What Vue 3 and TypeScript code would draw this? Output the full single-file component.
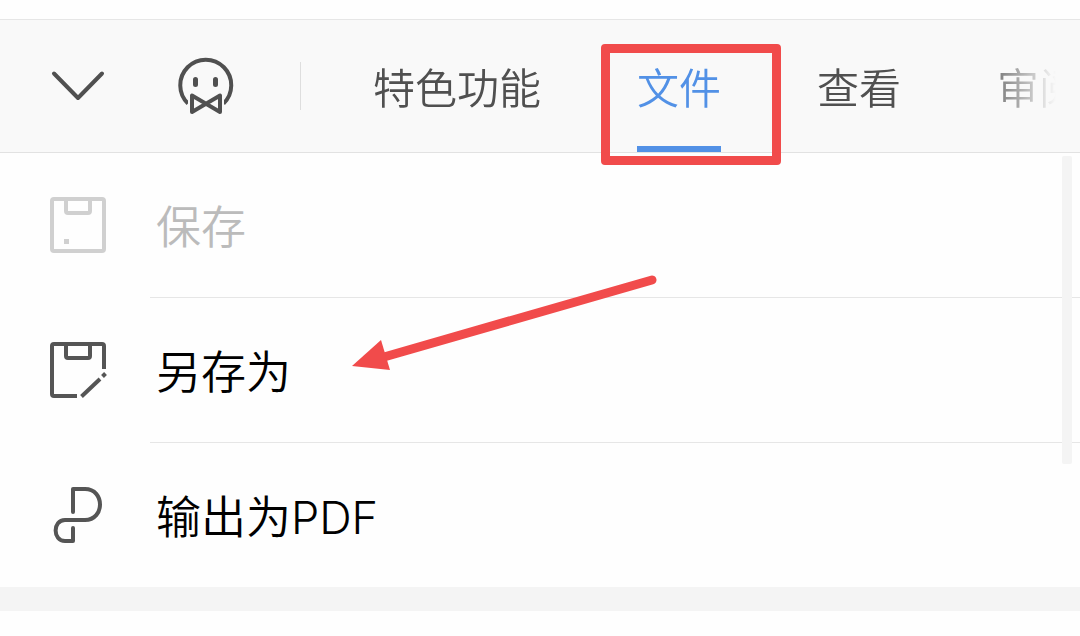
<script setup lang="ts">
import { ref } from 'vue'

interface MenuItem {
  id: string
  label: string
  disabled: boolean
}

const tabs: string[] = ['特色功能', '文件', '查看', '审阅']
const activeTab = ref<string>('文件')

const items: MenuItem[] = [
  { id: 'save', label: '保存', disabled: true },
  { id: 'save-as', label: '另存为', disabled: false },
  { id: 'pdf', label: '输出为PDF', disabled: false },
]
</script>

<template>
  <main class="panel">
    <header class="toolbar">
      <button class="tool collapse" type="button" aria-label="收起">
        <svg width="56" height="60" viewBox="0 0 56 60" fill="none" stroke="#505050" stroke-width="4" stroke-linecap="round" stroke-linejoin="round">
          <path d="M4 17.500L28 42L52 17.500" />
        </svg>
      </button>
      <button class="tool assistant" type="button" aria-label="助手">
        <svg width="60" height="60" viewBox="0 0 60 60" fill="none" stroke="#505050" stroke-width="4">
          <path d="M12 47.500A25.500 25.500 0 1 1 47.500 47.500" />
          <path d="M19.500 23.500V28.500M39.500 23.500V28.500" stroke-width="5" stroke-linecap="round" />
          <path d="M12 38H48V60H12Z" fill="#f9f9f9" stroke="none" />
          <path d="M16 39.500V56L44 39.500V56Z" stroke-linejoin="round" />
        </svg>
      </button>
      <span class="separator"></span>
      <nav class="tabs">
        <button
          v-for="tab in tabs"
          :key="tab"
          type="button"
          class="tab"
          :class="{ active: tab === activeTab }"
          @click="activeTab = tab"
        >{{ tab }}</button>
      </nav>
    </header>

    <section class="menu">
      <button v-for="item in items" :key="item.id" type="button" class="item" :disabled="item.disabled">
        <svg class="icon" width="60" height="60" viewBox="0 0 60 60" fill="none" stroke="currentColor" stroke-width="4" stroke-linejoin="round">
          <template v-if="item.id === 'save'">
            <rect x="4" y="4" width="52" height="52" rx="2" />
            <path d="M18 4V16Q18 18 20 18H40Q42 18 42 16V4" />
            <path d="M16 46.500H21" stroke-width="5" />
          </template>
          <template v-else-if="item.id === 'save-as'">
            <path d="M29 56H6Q4 56 4 54V6Q4 4 6 4H54Q56 4 56 6V29" />
            <path d="M18 4V16Q18 18 20 18H40Q42 18 42 16V4" />
            <path d="M33.500 56.500L52 39M54.500 36.500L57.500 33.500" />
          </template>
          <template v-else>
            <path d="M25 27V4H37C57 4 57 35 37 35H17C4.500 35 4.500 56 17 56H25V43" stroke-linecap="round" />
          </template>
        </svg>
        <span class="label">{{ item.label }}</span>
      </button>
      <span class="scrollbar"></span>
    </section>
    <div class="band"></div>

    <span class="highlight"></span>
    <svg class="arrow" width="320" height="110" viewBox="0 0 320 110" aria-hidden="true">
      <path d="M34 88L302 11" stroke="#f14b4b" stroke-width="9" stroke-linecap="round" />
      <path d="M2 97L31 71L40 101Z" fill="#f14b4b" />
    </svg>
  </main>
</template>

<style>
body {
  margin: 0;
  background: #fefefe;
}
</style>

<style scoped>
.panel {
  position: relative;
  padding-top: 19px;
  overflow: hidden;
  font-family: Inter, "Noto Sans CJK SC", sans-serif;
}

button {
  margin: 0;
  padding: 0;
  border: 0;
  background: none;
  font-family: inherit;
  cursor: pointer;
}

button:disabled {
  cursor: default;
}

svg {
  display: block;
}

.toolbar {
  display: flex;
  align-items: center;
  height: 132px;
  border-top: 1px solid #e6e6e6;
  border-bottom: 1px solid #e2e2e2;
  background: #f9f9f9;
}

.collapse {
  margin-left: 50px;
}

.assistant {
  margin-left: 70px;
}

.separator {
  width: 1px;
  height: 48px;
  margin-left: 64px;
  background: #dedede;
}

.tabs {
  display: flex;
  flex: 1;
  gap: 96px;
  align-self: stretch;
  min-width: 0;
  margin-right: 24px;
  padding-left: 72px;
  overflow: hidden;
  mask-image: linear-gradient(to left, transparent 0, #000 80px);
}

.tab {
  box-sizing: border-box;
  flex: none;
  padding-top: 6px;
  border-top: 6px solid transparent;
  border-bottom: 6px solid transparent;
  color: #505050;
  font-size: 42px;
  font-weight: 350;
  line-height: 60px;
}

.tab.active {
  border-bottom-color: #5291e6;
  color: #5291e6;
}

.menu {
  position: relative;
}

.item {
  position: relative;
  display: flex;
  align-items: center;
  width: 100%;
  height: 144px;
  padding-left: 48px;
  color: #000;
  font-size: 45px;
  font-weight: 350;
  line-height: 60px;
}

.item + .item {
  margin-top: 1px;
}

.item + .item::before {
  content: "";
  position: absolute;
  top: -1px;
  right: 0;
  left: 150px;
  height: 1px;
  background: #e6e6e6;
}

.icon {
  color: #555;
}

.label {
  margin-left: 48px;
  padding-top: 6px;
}

.item:disabled {
  color: #bbb;
}

.item:disabled .icon {
  color: #d0d0d0;
}

.scrollbar {
  position: absolute;
  top: 3px;
  right: 8px;
  width: 10px;
  height: 308px;
  border-radius: 2px;
  background: #f4f4f4;
}

.band {
  height: 24px;
  background: #f4f4f4;
}

.highlight {
  position: absolute;
  top: 44px;
  left: 601px;
  box-sizing: border-box;
  width: 180px;
  height: 121px;
  border: 9px solid #f14b4b;
  border-radius: 4px;
  pointer-events: none;
}

.arrow {
  position: absolute;
  top: 269px;
  left: 350px;
  pointer-events: none;
}
</style>
